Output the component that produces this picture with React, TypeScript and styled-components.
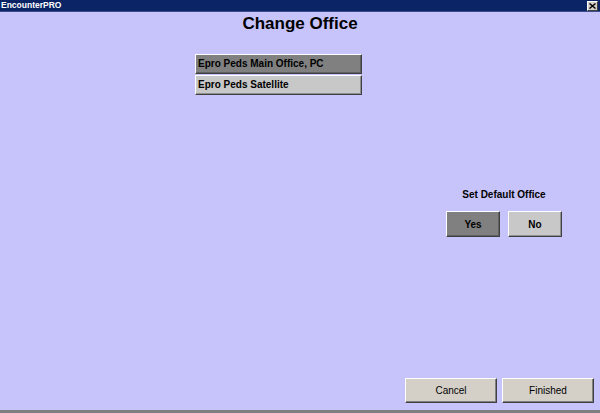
import React from "react";
import styled, { createGlobalStyle } from "styled-components";

const Global = createGlobalStyle`
  html, body { margin: 0; padding: 0; }
  body { font-family: "Liberation Sans", Arial, sans-serif; }
`;

const Window = styled.div`
  width: 600px;
  height: 413px;
  box-sizing: border-box;
  display: flex;
  flex-direction: column;
  background: #c7c4fb;
  border-bottom: 3px solid #808080;
  overflow: hidden;
`;

const TitleBar = styled.div`
  height: 12px;
  box-sizing: border-box;
  flex: none;
  background: #0a2466;
  border-bottom: 1px solid #3a4c8a;
  display: flex;
  align-items: center;
  justify-content: space-between;
  padding: 0 2px 0 1px;
`;

const TitleText = styled.span`
  color: #ffffff;
  font-weight: bold;
  font-size: 8.5px;
  line-height: 11px;
`;

const CloseBox = styled.div`
  width: 11px;
  height: 10px;
  box-sizing: border-box;
  background: #d4d0c8;
  border: 1px solid;
  border-color: #ffffff #404040 #404040 #ffffff;
  display: flex;
  align-items: center;
  justify-content: center;
`;

const Body = styled.div`
  flex: 1;
  display: flex;
  flex-direction: column;
  min-height: 0;
`;

const Heading = styled.h1`
  margin: 2px 0 0;
  font-size: 17px;
  line-height: 20px;
  font-weight: bold;
  text-align: center;
  color: #000;
`;

const OfficeList = styled.div`
  margin: 20px 0 0 195px;
  width: 167px;
  display: flex;
  flex-direction: column;
  gap: 1px;
`;

const OfficeButton = styled.div<{ $selected?: boolean }>`
  height: 20px;
  box-sizing: border-box;
  background: ${(p) => (p.$selected ? "#808080" : "#c8c8c8")};
  border: 1px solid;
  border-color: #ffffff #404040 #404040 #ffffff;
  box-shadow: inset -1px -1px 0 ${(p) => (p.$selected ? "#606060" : "#909090")};
  font-size: 10px;
  font-weight: bold;
  line-height: 17px;
  padding-left: 2px;
  color: #000;
  white-space: nowrap;
`;

const DefaultGroup = styled.div`
  align-self: flex-end;
  margin: 94px 38px 0 0;
  width: 116px;
  display: flex;
  flex-direction: column;
  align-items: center;
`;

const GroupLabel = styled.div`
  font-size: 10px;
  font-weight: bold;
  line-height: 12px;
  color: #000;
  white-space: nowrap;
`;

const ChoiceRow = styled.div`
  margin-top: 10px;
  display: flex;
  gap: 8px;
`;

const ChoiceButton = styled.div<{ $selected?: boolean }>`
  width: 54px;
  height: 26px;
  box-sizing: border-box;
  background: ${(p) => (p.$selected ? "#808080" : "#c8c8c8")};
  border: 1px solid;
  border-color: #ffffff #404040 #404040 #ffffff;
  box-shadow: inset -1px -1px 0 ${(p) => (p.$selected ? "#606060" : "#909090")};
  display: flex;
  align-items: center;
  justify-content: center;
  font-size: 10px;
  font-weight: bold;
  color: #000;
`;

const Footer = styled.div`
  margin-top: auto;
  display: flex;
  justify-content: flex-end;
  gap: 5px;
  padding: 0 6px 7px 0;
`;

const FooterButton = styled.div`
  width: 92px;
  height: 25px;
  box-sizing: border-box;
  background: #d4d0c8;
  border: 1px solid;
  border-color: #ffffff #404040 #404040 #ffffff;
  box-shadow: inset -1px -1px 0 #808080;
  display: flex;
  align-items: center;
  justify-content: center;
  font-size: 10px;
  color: #000;
`;

export default function App() {
  return (
    <>
      <Global />
      <Window>
        <TitleBar>
          <TitleText>EncounterPRO</TitleText>
          <CloseBox>
            <svg width="7" height="6" viewBox="0 0 7 6">
              <path d="M0.5 0.5 L6.5 5.5 M6.5 0.5 L0.5 5.5" stroke="#000" strokeWidth="1.4" />
            </svg>
          </CloseBox>
        </TitleBar>
        <Body>
          <Heading>Change Office</Heading>
          <OfficeList>
            <OfficeButton $selected>Epro Peds Main Office, PC</OfficeButton>
            <OfficeButton>Epro Peds Satellite</OfficeButton>
          </OfficeList>
          <DefaultGroup>
            <GroupLabel>Set Default Office</GroupLabel>
            <ChoiceRow>
              <ChoiceButton $selected>Yes</ChoiceButton>
              <ChoiceButton>No</ChoiceButton>
            </ChoiceRow>
          </DefaultGroup>
          <Footer>
            <FooterButton>Cancel</FooterButton>
            <FooterButton>Finished</FooterButton>
          </Footer>
        </Body>
      </Window>
    </>
  );
}
